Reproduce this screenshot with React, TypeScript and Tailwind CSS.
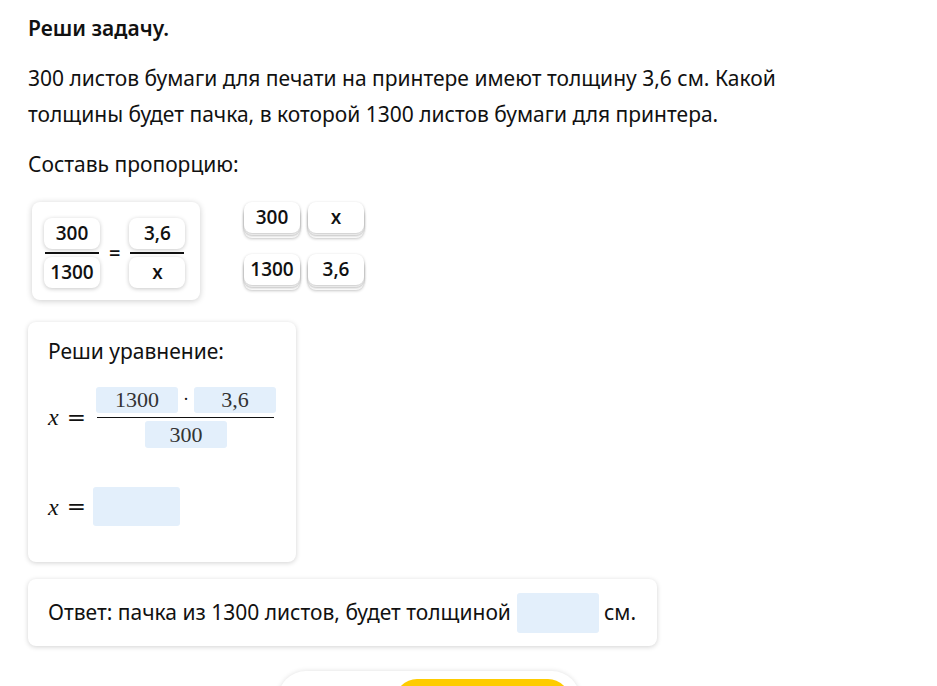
import React from "react";

const sans = { fontFamily: '"Noto Sans", "Open Sans", sans-serif' };
const serif = { fontFamily: '"Liberation Serif", "DejaVu Serif", serif' };
const open = { fontFamily: '"Open Sans", sans-serif' };

function Tile({ children }: { children: React.ReactNode }) {
  return (
    <div
      className="flex h-[31px] w-[56px] items-center justify-center rounded-[8px] bg-white text-[19px] font-semibold text-[#111] shadow-[0_1px_4px_rgba(0,0,0,0.22)]"
      style={open}
    >
      {children}
    </div>
  );
}

function StackTile({ children }: { children: React.ReactNode }) {
  return (
    <div className="relative h-[36px] w-[56px]">
      <div className="absolute left-0 top-[6px] h-[30px] w-[56px] rounded-[8px] bg-white shadow-[0_1px_3px_rgba(0,0,0,0.22)]" />
      <div className="absolute left-0 top-[3px] h-[30px] w-[56px] rounded-[8px] bg-white shadow-[0_1px_3px_rgba(0,0,0,0.22)]" />
      <div
        className="absolute left-0 top-0 flex h-[31px] w-[56px] items-center justify-center rounded-[8px] bg-white text-[19px] font-semibold text-[#111] shadow-[0_1px_3px_rgba(0,0,0,0.25)]"
        style={open}
      >
        {children}
      </div>
    </div>
  );
}

function Blue({ w, h, children }: { w: string; h: string; children?: React.ReactNode }) {
  return (
    <div className={`flex items-center justify-center rounded-[3px] bg-[#e3effb] ${w} ${h}`}>{children}</div>
  );
}

function Eq() {
  return (
    <>
      <span className="text-[24px] italic leading-none" style={serif}>x</span>
      <span className="ml-[8px] text-[23px] leading-none" style={{ fontFamily: '"DejaVu Serif", serif' }}>=</span>
    </>
  );
}

export default function App() {
  return (
    <div className="h-[686px] w-[937px] overflow-hidden bg-white text-[#111]" style={sans}>
      <div className="pl-[28px] pt-[14px]">
        <div className="text-[21px] font-semibold leading-[28px]">Реши задачу.</div>
        <div className="mt-[18px] w-[790px] text-[21px] leading-[36px]">
          300 листов бумаги для печати на принтере имеют толщину 3,6 см. Какой толщины будет пачка, в которой 1300 листов бумаги для принтера.
        </div>
        <div className="mt-[18px] text-[21px] leading-[28px]">Составь пропорцию:</div>

        <div className="mt-[24px] flex items-start gap-[44px] pl-[4px]">
          <div className="flex h-[98px] w-[168px] items-start rounded-[8px] bg-white pl-[12px] pt-[16px] shadow-[0_1px_6px_rgba(0,0,0,0.2)]">
            <div className="flex flex-col items-center">
              <Tile>300</Tile>
              <div className="my-[3px] h-[2px] w-[54px] bg-[#111]" />
              <Tile>1300</Tile>
            </div>
            <div className="mx-[9px] mt-[20px] text-[20px] font-semibold" style={open}>=</div>
            <div className="flex flex-col items-center">
              <Tile>3,6</Tile>
              <div className="my-[3px] h-[2px] w-[54px] bg-[#111]" />
              <Tile>x</Tile>
            </div>
          </div>
          <div className="flex flex-col gap-[16px]">
            <div className="flex gap-[8px]">
              <StackTile>300</StackTile>
              <StackTile>x</StackTile>
            </div>
            <div className="flex gap-[8px]">
              <StackTile>1300</StackTile>
              <StackTile>3,6</StackTile>
            </div>
          </div>
        </div>

        <div className="mt-[22px] h-[240px] w-[268px] rounded-[8px] bg-white pl-[20px] pt-[17px] shadow-[0_1px_5px_rgba(0,0,0,0.18)]">
          <div className="text-[21px] leading-[24px]">Реши уравнение:</div>
          <div className="mt-[23px] flex items-center">
            <Eq />
            <div className="ml-[10px] flex flex-col items-center">
              <div className="flex items-center">
                <Blue w="w-[82px]" h="h-[26px]"><span className="text-[22px] text-[#333]" style={serif}>1300</span></Blue>
                <span className="mx-[5px] text-[18px]" style={serif}>·</span>
                <Blue w="w-[82px]" h="h-[26px]"><span className="text-[22px] text-[#333]" style={serif}>3,6</span></Blue>
              </div>
              <div className="mt-[4px] h-[1px] w-[177px] bg-[#111]" />
              <div className="mt-[3px]">
                <Blue w="w-[82px]" h="h-[27px]"><span className="text-[22px] text-[#333]" style={serif}>300</span></Blue>
              </div>
            </div>
          </div>
          <div className="mt-[39px] flex items-center">
            <Eq />
            <div className="ml-[7px]">
              <Blue w="w-[87px]" h="h-[39px]" />
            </div>
          </div>
        </div>

        <div className="mt-[17px] flex h-[67px] w-[629px] items-center rounded-[8px] bg-white pl-[20px] shadow-[0_1px_5px_rgba(0,0,0,0.18)]">
          <span className="text-[21px]">Ответ: пачка из 1300 листов, будет толщиной</span>
          <div className="ml-[6px]">
            <Blue w="w-[82px]" h="h-[40px]" />
          </div>
          <span className="ml-[5px] text-[21px]">см.</span>
        </div>

        <div className="ml-[250px] mt-[25px] flex h-[60px] w-[302px] items-start rounded-[28px] bg-white pl-[117px] pt-[8px] shadow-[0_0_5px_rgba(0,0,0,0.13)]">
          <div className="h-[44px] w-[175px] rounded-[22px] bg-[#fecc00]" />
        </div>
      </div>
    </div>
  );
}
